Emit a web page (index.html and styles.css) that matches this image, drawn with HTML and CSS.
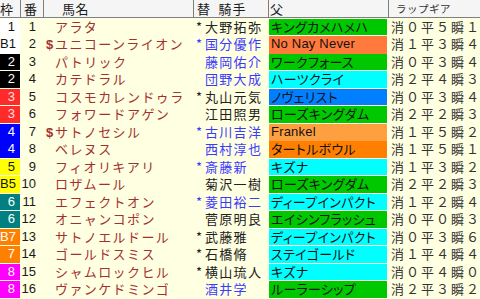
FILE: index.html
```html
<!DOCTYPE html>
<html lang="ja">
<head>
<meta charset="utf-8">
<title>出馬表</title>
<link rel="stylesheet" href="styles.css">
</head>
<body>
<div class="sheet">
  <div class="hd">
    <div class="h-waku">枠</div>
    <div class="h-ban">番</div>
    <div class="h-name">馬名</div>
    <div class="h-jockey">替<span class="h-jk">騎手</span></div>
    <div class="h-sire">父</div>
    <div class="h-lap">ラップギア</div>
  </div>
  <div class="bd">
    <div class="row"><div class="waku w1">1</div><div class="ban">1</div><div class="name"><span class="mk"></span>アラタ</div><div class="jockey"><span class="st">*</span>大野拓弥</div><div class="sire s-green">キングカメハメハ</div><div class="lap">消０平５瞬１</div></div>
    <div class="row"><div class="waku w1">B1</div><div class="ban">2</div><div class="name"><span class="mk">$</span>ユニコーンライオン</div><div class="jockey blue"><span class="st">*</span>国分優作</div><div class="sire s-coral latin">No Nay Never</div><div class="lap">消１平３瞬４</div></div>
    <div class="row"><div class="waku w2">2</div><div class="ban">3</div><div class="name"><span class="mk"></span>パトリック</div><div class="jockey blue"><span class="st"></span>藤岡佑介</div><div class="sire s-green">ワークフォース</div><div class="lap">消０平３瞬４</div></div>
    <div class="row"><div class="waku w2">2</div><div class="ban">4</div><div class="name"><span class="mk"></span>カテドラル</div><div class="jockey blue"><span class="st"></span>団野大成</div><div class="sire s-cyan">ハーツクライ</div><div class="lap">消２平４瞬３</div></div>
    <div class="row"><div class="waku w3">3</div><div class="ban">5</div><div class="name"><span class="mk"></span>コスモカレンドゥラ</div><div class="jockey"><span class="st">*</span>丸山元気</div><div class="sire s-blue">ノヴェリスト</div><div class="lap">消０平３瞬４</div></div>
    <div class="row"><div class="waku w3">3</div><div class="ban">6</div><div class="name"><span class="mk"></span>フォワードアゲン</div><div class="jockey"><span class="st"></span>江田照男</div><div class="sire s-green">ローズキングダム</div><div class="lap">消２平２瞬３</div></div>
    <div class="row"><div class="waku w4">4</div><div class="ban">7</div><div class="name"><span class="mk">$</span>サトノセシル</div><div class="jockey blue"><span class="st">*</span>古川吉洋</div><div class="sire s-lorange latin">Frankel</div><div class="lap">消１平５瞬２</div></div>
    <div class="row"><div class="waku w4">4</div><div class="ban">8</div><div class="name"><span class="mk"></span>ベレヌス</div><div class="jockey blue"><span class="st"></span>西村淳也</div><div class="sire s-orange">タートルボウル</div><div class="lap">消１平５瞬１</div></div>
    <div class="row"><div class="waku w5">5</div><div class="ban">9</div><div class="name"><span class="mk"></span>フィオリキアリ</div><div class="jockey blue"><span class="st">*</span>斎藤新</div><div class="sire s-cyan">キズナ</div><div class="lap">消１平３瞬２</div></div>
    <div class="row"><div class="waku w5">B5</div><div class="ban">10</div><div class="name"><span class="mk"></span>ロザムール</div><div class="jockey"><span class="st"></span>菊沢一樹</div><div class="sire s-green">ローズキングダム</div><div class="lap">消２平２瞬３</div></div>
    <div class="row"><div class="waku w6">6</div><div class="ban">11</div><div class="name"><span class="mk"></span>エフェクトオン</div><div class="jockey blue"><span class="st">*</span>菱田裕二</div><div class="sire s-cyan">ディープインパクト</div><div class="lap">消１平２瞬４</div></div>
    <div class="row"><div class="waku w6">6</div><div class="ban">12</div><div class="name"><span class="mk"></span>オニャンコポン</div><div class="jockey"><span class="st"></span>菅原明良</div><div class="sire s-green">エイシンフラッシュ</div><div class="lap">消０平０瞬３</div></div>
    <div class="row"><div class="waku w7">B7</div><div class="ban">13</div><div class="name"><span class="mk"></span>サトノエルドール</div><div class="jockey"><span class="st">*</span>武藤雅</div><div class="sire s-cyan">ディープインパクト</div><div class="lap">消０平３瞬６</div></div>
    <div class="row"><div class="waku w7">7</div><div class="ban">14</div><div class="name"><span class="mk"></span>ゴールドスミス</div><div class="jockey"><span class="st">*</span>石橋脩</div><div class="sire s-cyan">ステイゴールド</div><div class="lap">消１平４瞬４</div></div>
    <div class="row"><div class="waku w8">8</div><div class="ban">15</div><div class="name"><span class="mk"></span>シャムロックヒル</div><div class="jockey"><span class="st">*</span>横山琉人</div><div class="sire s-cyan">キズナ</div><div class="lap">消０平４瞬０</div></div>
    <div class="row"><div class="waku w8">8</div><div class="ban">16</div><div class="name"><span class="mk"></span>ヴァンケドミンゴ</div><div class="jockey blue"><span class="st"></span>酒井学</div><div class="sire s-green">ルーラーシップ</div><div class="lap">消２平３瞬２</div></div>
  </div>
</div>
</body>
</html>
```
FILE: styles.css
```css
* { box-sizing: border-box; }
html, body { margin: 0; padding: 0; }
body {
  width: 480px;
  height: 299px;
  overflow: hidden;
  background: #ffffe1;
  font-family: "Noto Sans CJK JP", "Noto Sans", sans-serif;
  color: #222;
}
.sheet { width: 480px; }
.hd, .row {
  display: grid;
  grid-template-columns: 20px 23px 150px 75px 120px 92px;
}
.hd {
  height: 18px;
  background: #f5f5f5;
  border-bottom: 1px solid #7f7f7f;
  font-size: 13px;
  line-height: 17px;
  color: #1a1a1a;
}
.hd > div {
  border-left: 1px solid #7f7f7f;
  white-space: nowrap;
  letter-spacing: 0.5px;
}
.hd > .h-waku { border-left: none; padding-left: 0; }
.h-ban { padding-left: 3px; }
.h-name { padding-left: 18px; }
.h-jockey { padding-left: 3px; }
.h-jk { margin-left: 8px; letter-spacing: 1px; }
.h-sire { padding-left: 1px; }
.h-lap { padding-left: 7px; font-size: 10.5px; color: #333; letter-spacing: 0; }

.bd {
  display: flex;
  flex-direction: column;
  gap: 1px;
  padding-top: 0.5px;
}
.row { height: 16.5px; line-height: 16.5px; white-space: nowrap; }

.waku {
  font-family: "Liberation Sans", sans-serif;
  font-size: 13px;
  text-align: right;
  padding-right: 5px;
  color: #fff;
}
.w1 { background: #ffffff; color: #111; }
.w2 { background: #000000; }
.w3 { background: #ff2a2a; color: #ffe0e0; }
.w4 { background: #0000ff; }
.w5 { background: #ffff00; color: #111; }
.w6 { background: #008080; }
.w7 { background: #ff8000; }
.w8 { background: #ff00ff; }

.ban {
  font-family: "Liberation Sans", sans-serif;
  font-size: 13px;
  text-align: right;
  padding-right: 7px;
  color: #1a1a1a;
}
.name {
  padding-left: 3px;
  font-size: 13px;
  letter-spacing: 1.4px;
  color: #a33030;
  position: relative;
  z-index: 1;
}
.mk {
  display: inline-block;
  width: 9px;
  letter-spacing: 0;
  font-family: "Liberation Sans", sans-serif;
  font-weight: bold;
}
.jockey {
  padding-left: 3px;
  font-size: 13px;
  letter-spacing: 1.3px;
  color: #222;
}
.jockey.blue { color: #3a3aff; }
.st {
  display: inline-block;
  width: 9px;
  letter-spacing: 0;
}
.sire {
  margin: 0 1px;
  padding-left: 2px;
  font-size: 13px;
  letter-spacing: 0.3px;
  font-feature-settings: "palt";
  color: #111;
}
.sire.latin {
  font-family: "Liberation Sans", sans-serif;
  font-size: 13px;
  letter-spacing: 0.2px;
}
.s-green { background: #00c800; }
.s-cyan { background: #00ffff; }
.s-blue { background: #0080ff; }
.s-coral { background: #ff7a3c; }
.s-lorange { background: #ffa040; }
.s-orange { background: #ff8000; }
.lap {
  padding-left: 3px;
  font-size: 13px;
  letter-spacing: 2px;
  color: #333;
}
```
